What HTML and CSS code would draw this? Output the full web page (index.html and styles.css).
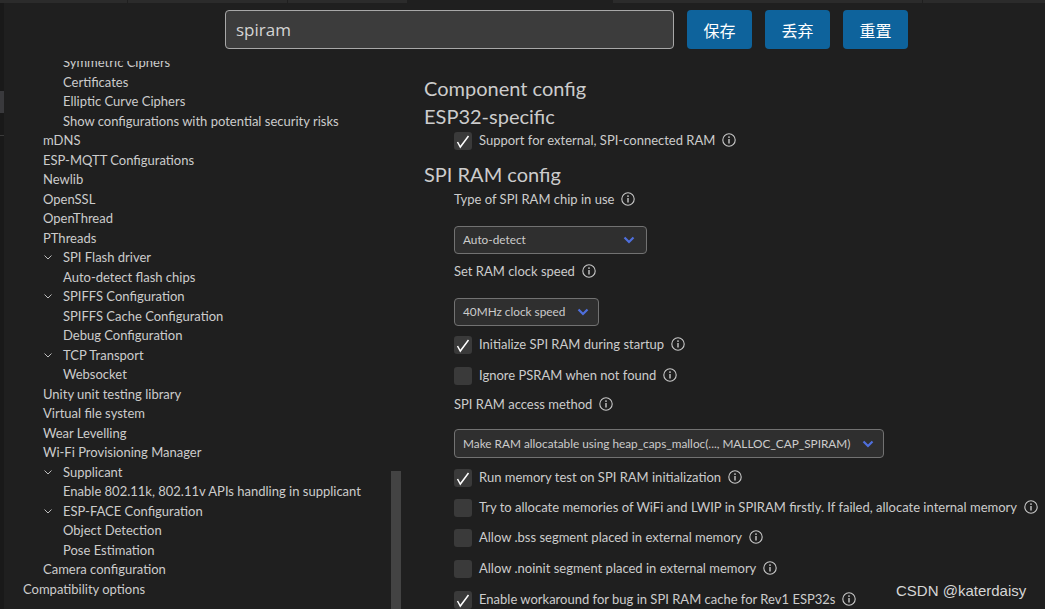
FILE: index.html
```html
<!DOCTYPE html>
<html lang="en">
<head>
<meta charset="utf-8">
<title>ESP-IDF SDK Configuration Editor</title>
<link rel="stylesheet" href="styles.css">
</head>
<body>
<div class="tabstrip">
  <div class="tab t1"></div>
  <div class="tab t2"></div>
  <div class="tab t3"></div>
  <div class="tab-gap"></div>
  <div class="tab t4"></div>
  <div class="tab t5"></div>
</div>
<div class="frame">
  <div class="activity">
    <div class="activity-mark"></div>
    <div class="activity-line"></div>
  </div>
  <div class="app">
    <header class="toolbar">
      <div class="search">spiram</div>
      <button class="btn">保存</button>
      <button class="btn">丢弃</button>
      <button class="btn">重置</button>
    </header>
    <main class="main">
      <nav class="sidebar">
        <ul class="tree">
          <li class="row l3">Symmetric Ciphers</li>
          <li class="row l3">Certificates</li>
          <li class="row l3">Elliptic Curve Ciphers</li>
          <li class="row l3">Show configurations with potential security risks</li>
          <li class="row l2">mDNS</li>
          <li class="row l2">ESP-MQTT Configurations</li>
          <li class="row l2">Newlib</li>
          <li class="row l2">OpenSSL</li>
          <li class="row l2">OpenThread</li>
          <li class="row l2">PThreads</li>
          <li class="row l2"><span class="chev"><svg width="8" height="5" viewBox="0 0 8 5"><path d="M0.5 0.5 L4 4 L7.5 0.5" fill="none" stroke="#bdbdbd" stroke-width="1"/></svg></span>SPI Flash driver</li>
          <li class="row l3">Auto-detect flash chips</li>
          <li class="row l2"><span class="chev"><svg width="8" height="5" viewBox="0 0 8 5"><path d="M0.5 0.5 L4 4 L7.5 0.5" fill="none" stroke="#bdbdbd" stroke-width="1"/></svg></span>SPIFFS Configuration</li>
          <li class="row l3">SPIFFS Cache Configuration</li>
          <li class="row l3">Debug Configuration</li>
          <li class="row l2"><span class="chev"><svg width="8" height="5" viewBox="0 0 8 5"><path d="M0.5 0.5 L4 4 L7.5 0.5" fill="none" stroke="#bdbdbd" stroke-width="1"/></svg></span>TCP Transport</li>
          <li class="row l3">Websocket</li>
          <li class="row l2">Unity unit testing library</li>
          <li class="row l2">Virtual file system</li>
          <li class="row l2">Wear Levelling</li>
          <li class="row l2">Wi-Fi Provisioning Manager</li>
          <li class="row l2"><span class="chev"><svg width="8" height="5" viewBox="0 0 8 5"><path d="M0.5 0.5 L4 4 L7.5 0.5" fill="none" stroke="#bdbdbd" stroke-width="1"/></svg></span>Supplicant</li>
          <li class="row l3">Enable 802.11k, 802.11v APIs handling in supplicant</li>
          <li class="row l2"><span class="chev"><svg width="8" height="5" viewBox="0 0 8 5"><path d="M0.5 0.5 L4 4 L7.5 0.5" fill="none" stroke="#bdbdbd" stroke-width="1"/></svg></span>ESP-FACE Configuration</li>
          <li class="row l3">Object Detection</li>
          <li class="row l3">Pose Estimation</li>
          <li class="row l2">Camera configuration</li>
          <li class="row l1">Compatibility options</li>
        </ul>
        <div class="scrollbar"></div>
      </nav>
      <section class="content">
        <h1 class="h-main">Component config</h1>
        <h2 class="h-sub">ESP32-specific</h2>
        <div class="field check">
          <span class="box"><svg width="18" height="18" viewBox="0 0 18 18"><path d="M3.5 10 L6.3 15 L14.5 4" fill="none" stroke="#ffffff" stroke-width="1.5"/></svg></span>
          <span class="txt">Support for external, SPI-connected RAM</span>
          <span class="info"><svg width="14" height="14" viewBox="0 0 14 14"><circle cx="7" cy="7" r="6.2" fill="none" stroke="#c8c8c8" stroke-width="1.1"/><circle cx="7" cy="4.1" r="0.9" fill="#c8c8c8"/><path d="M7 6 V10.6" stroke="#c8c8c8" stroke-width="1.4"/></svg></span>
        </div>

        <h2 class="h-sub gap-h">SPI RAM config</h2>
        <div class="field label first-label">
          <span class="txt">Type of SPI RAM chip in use</span>
          <span class="info"><svg width="14" height="14" viewBox="0 0 14 14"><circle cx="7" cy="7" r="6.2" fill="none" stroke="#c8c8c8" stroke-width="1.1"/><circle cx="7" cy="4.1" r="0.9" fill="#c8c8c8"/><path d="M7 6 V10.6" stroke="#c8c8c8" stroke-width="1.4"/></svg></span>
        </div>
        <div class="select sel-wide">
          <span>Auto-detect</span>
          <svg class="caret" width="12" height="8" viewBox="0 0 12 8"><path d="M1.5 1.5 L6 6 L10.5 1.5" fill="none" stroke="#4f6fdc" stroke-width="2.2"/></svg>
        </div>
        <div class="field label after-select">
          <span class="txt">Set RAM clock speed</span>
          <span class="info"><svg width="14" height="14" viewBox="0 0 14 14"><circle cx="7" cy="7" r="6.2" fill="none" stroke="#c8c8c8" stroke-width="1.1"/><circle cx="7" cy="4.1" r="0.9" fill="#c8c8c8"/><path d="M7 6 V10.6" stroke="#c8c8c8" stroke-width="1.4"/></svg></span>
        </div>
        <div class="select">
          <span>40MHz clock speed</span>
          <svg class="caret" width="12" height="8" viewBox="0 0 12 8"><path d="M1.5 1.5 L6 6 L10.5 1.5" fill="none" stroke="#4f6fdc" stroke-width="2.2"/></svg>
        </div>
        <div class="field check after-select-check">
          <span class="box"><svg width="18" height="18" viewBox="0 0 18 18"><path d="M3.5 10 L6.3 15 L14.5 4" fill="none" stroke="#ffffff" stroke-width="1.5"/></svg></span>
          <span class="txt">Initialize SPI RAM during startup</span>
          <span class="info"><svg width="14" height="14" viewBox="0 0 14 14"><circle cx="7" cy="7" r="6.2" fill="none" stroke="#c8c8c8" stroke-width="1.1"/><circle cx="7" cy="4.1" r="0.9" fill="#c8c8c8"/><path d="M7 6 V10.6" stroke="#c8c8c8" stroke-width="1.4"/></svg></span>
        </div>
        <div class="field check wide-gap">
          <span class="box"></span>
          <span class="txt">Ignore PSRAM when not found</span>
          <span class="info"><svg width="14" height="14" viewBox="0 0 14 14"><circle cx="7" cy="7" r="6.2" fill="none" stroke="#c8c8c8" stroke-width="1.1"/><circle cx="7" cy="4.1" r="0.9" fill="#c8c8c8"/><path d="M7 6 V10.6" stroke="#c8c8c8" stroke-width="1.4"/></svg></span>
        </div>
        <div class="field label after-check">
          <span class="txt">SPI RAM access method</span>
          <span class="info"><svg width="14" height="14" viewBox="0 0 14 14"><circle cx="7" cy="7" r="6.2" fill="none" stroke="#c8c8c8" stroke-width="1.1"/><circle cx="7" cy="4.1" r="0.9" fill="#c8c8c8"/><path d="M7 6 V10.6" stroke="#c8c8c8" stroke-width="1.4"/></svg></span>
        </div>
        <div class="select sel-tall">
          <span>Make RAM allocatable using heap_caps_malloc(..., MALLOC_CAP_SPIRAM)</span>
          <svg class="caret" width="12" height="8" viewBox="0 0 12 8"><path d="M1.5 1.5 L6 6 L10.5 1.5" fill="none" stroke="#4f6fdc" stroke-width="2.2"/></svg>
        </div>
        <div class="field check after-select-check2">
          <span class="box"><svg width="18" height="18" viewBox="0 0 18 18"><path d="M3.5 10 L6.3 15 L14.5 4" fill="none" stroke="#ffffff" stroke-width="1.5"/></svg></span>
          <span class="txt">Run memory test on SPI RAM initialization</span>
          <span class="info"><svg width="14" height="14" viewBox="0 0 14 14"><circle cx="7" cy="7" r="6.2" fill="none" stroke="#c8c8c8" stroke-width="1.1"/><circle cx="7" cy="4.1" r="0.9" fill="#c8c8c8"/><path d="M7 6 V10.6" stroke="#c8c8c8" stroke-width="1.4"/></svg></span>
        </div>
        <div class="field check">
          <span class="box"></span>
          <span class="txt">Try to allocate memories of WiFi and LWIP in SPIRAM firstly. If failed, allocate internal memory</span>
          <span class="info"><svg width="14" height="14" viewBox="0 0 14 14"><circle cx="7" cy="7" r="6.2" fill="none" stroke="#c8c8c8" stroke-width="1.1"/><circle cx="7" cy="4.1" r="0.9" fill="#c8c8c8"/><path d="M7 6 V10.6" stroke="#c8c8c8" stroke-width="1.4"/></svg></span>
        </div>
        <div class="field check">
          <span class="box"></span>
          <span class="txt">Allow .bss segment placed in external memory</span>
          <span class="info"><svg width="14" height="14" viewBox="0 0 14 14"><circle cx="7" cy="7" r="6.2" fill="none" stroke="#c8c8c8" stroke-width="1.1"/><circle cx="7" cy="4.1" r="0.9" fill="#c8c8c8"/><path d="M7 6 V10.6" stroke="#c8c8c8" stroke-width="1.4"/></svg></span>
        </div>
        <div class="field check wide-gap">
          <span class="box"></span>
          <span class="txt">Allow .noinit segment placed in external memory</span>
          <span class="info"><svg width="14" height="14" viewBox="0 0 14 14"><circle cx="7" cy="7" r="6.2" fill="none" stroke="#c8c8c8" stroke-width="1.1"/><circle cx="7" cy="4.1" r="0.9" fill="#c8c8c8"/><path d="M7 6 V10.6" stroke="#c8c8c8" stroke-width="1.4"/></svg></span>
        </div>
        <div class="field check wide-gap">
          <span class="box"><svg width="18" height="18" viewBox="0 0 18 18"><path d="M3.5 10 L6.3 15 L14.5 4" fill="none" stroke="#ffffff" stroke-width="1.5"/></svg></span>
          <span class="txt">Enable workaround for bug in SPI RAM cache for Rev1 ESP32s</span>
          <span class="info"><svg width="14" height="14" viewBox="0 0 14 14"><circle cx="7" cy="7" r="6.2" fill="none" stroke="#c8c8c8" stroke-width="1.1"/><circle cx="7" cy="4.1" r="0.9" fill="#c8c8c8"/><path d="M7 6 V10.6" stroke="#c8c8c8" stroke-width="1.4"/></svg></span>
        </div>
        <div class="watermark">CSDN @katerdaisy</div>
      </section>
    </main>
  </div>
</div>
</body>
</html>
```

FILE: styles.css
```css
* { box-sizing: border-box; }
html, body {
  margin: 0;
  padding: 0;
  width: 1045px;
  height: 609px;
  overflow: hidden;
  background: #1f1f1f;
  color: #cccccc;
  font-family: Lato, "Noto Sans", sans-serif;
  font-size: 13px;
}

/* top tab strip */
.tabstrip {
  display: flex;
  height: 3px;
}
.tab {
  background: #2b2b2b;
  border-right: 1px solid #1f1f1f;
}
.t1 { width: 128px; }
.t2 { width: 160px; }
.t3 { width: 120px; }
.tab-gap { width: 205px; }
.t4 { width: 310px; }
.t5 { flex: 1; border-right: 0; }

.frame {
  display: flex;
  height: 606px;
}
.activity {
  width: 4px;
  flex: none;
  background: #191919;
  display: flex;
  flex-direction: column;
}
.activity-mark {
  margin-top: 88px;
  height: 22px;
  background: #39393c;
}
.activity-line {
  margin-top: 22px;
  height: 1px;
  background: #3a3a3a;
}

.app {
  flex: 1;
  display: flex;
  flex-direction: column;
  min-width: 0;
}

/* toolbar */
.toolbar {
  height: 58px;
  flex: none;
  display: flex;
  align-items: flex-start;
  padding: 7px 0 0 221px;
  gap: 13px;
  background: #1f1f1f;
  position: relative;
  z-index: 2;
}
.search {
  width: 449px;
  height: 39px;
  background: #3c3c3c;
  border: 1px solid #a8a8a8;
  border-radius: 4px;
  padding: 0 10px;
  line-height: 37px;
  font-size: 17px;
  color: #d4d4d4;
  font-family: "Open Sans", Lato, sans-serif;
}
.btn {
  width: 65px;
  height: 39px;
  background: #0e639c;
  border: 0;
  border-radius: 4px;
  color: #ffffff;
  font-family: "Noto Sans CJK SC", sans-serif;
  font-size: 16px;
  padding: 0;
}

/* main */
.main {
  flex: 1;
  display: flex;
  min-height: 0;
}
.sidebar {
  width: 398px;
  flex: none;
  position: relative;
  overflow: hidden;
}
.tree {
  list-style: none;
  margin: -8.5px 0 0 0;
  padding: 0;
}
.row {
  height: 19.5px;
  display: flex;
  align-items: center;
  white-space: nowrap;
  color: #cccccc;
}
.l1 { padding-left: 19px; }
.l2 { padding-left: 39px; }
.l3 { padding-left: 59px; }
.chev {
  width: 20px;
  display: flex;
  align-items: center;
  padding-left: 1px;
  margin-top: 1px;
}
.scrollbar {
  position: absolute;
  right: 1px;
  top: 410px;
  bottom: 0;
  width: 10px;
  background: #434343;
}

/* content */
.content {
  flex: 1;
  position: relative;
  padding: 13px 0 0 22px;
  display: flex;
  flex-direction: column;
  align-items: flex-start;
  min-width: 0;
}
.h-main, .h-sub {
  margin: 0;
  font-weight: 400;
  font-size: 20px;
  line-height: 28px;
  color: #cccccc;
  white-space: nowrap;
}
.h-sub.gap-h { margin-top: 10px; }

.field {
  display: flex;
  align-items: center;
  height: 20px;
  margin-left: 30px;
  white-space: nowrap;
}
.label { margin-top: 0; }
.first-label { margin-top: 1px; }
.check { margin-top: 10px; }
.h-sub + .check { margin-top: 0; }
.after-select { margin-top: 7px; }
.check.after-select-check { margin-top: 8px; }
.after-check { margin-top: 10px; }
.check.after-select-check2 { margin-top: 9px; }
.check.wide-gap { margin-top: 11px; }

.box {
  width: 18px;
  height: 18px;
  flex: none;
  background: #3a3a3a;
  border-radius: 3px;
  margin-right: 7px;
  display: block;
  position: relative;
  top: 1px;
}
.box svg { display: block; }
.txt { color: #cccccc; }
.info {
  margin-left: 7px;
  display: flex;
  align-items: center;
}

.select {
  margin-left: 30px;
  margin-top: 17px;
  height: 28px;
  display: flex;
  align-items: center;
  gap: 12px;
  padding: 0 9px 0 8px;
  background: #2f2f2f;
  border: 1px solid #727272;
  border-radius: 4px;
  font-size: 11.8px;
  color: #cccccc;
  white-space: nowrap;
}
.sel-wide {
  width: 193px;
  justify-content: space-between;
  padding-right: 11px;
}
.select.sel-tall {
  height: 29px;
  margin-top: 15px;
}
.caret { display: block; flex: none; }

.watermark {
  position: absolute;
  left: 494px;
  top: 521px;
  font-family: "Liberation Sans", Arial, sans-serif;
  font-size: 15px;
  color: #d6d6d6;
  white-space: nowrap;
}
```
